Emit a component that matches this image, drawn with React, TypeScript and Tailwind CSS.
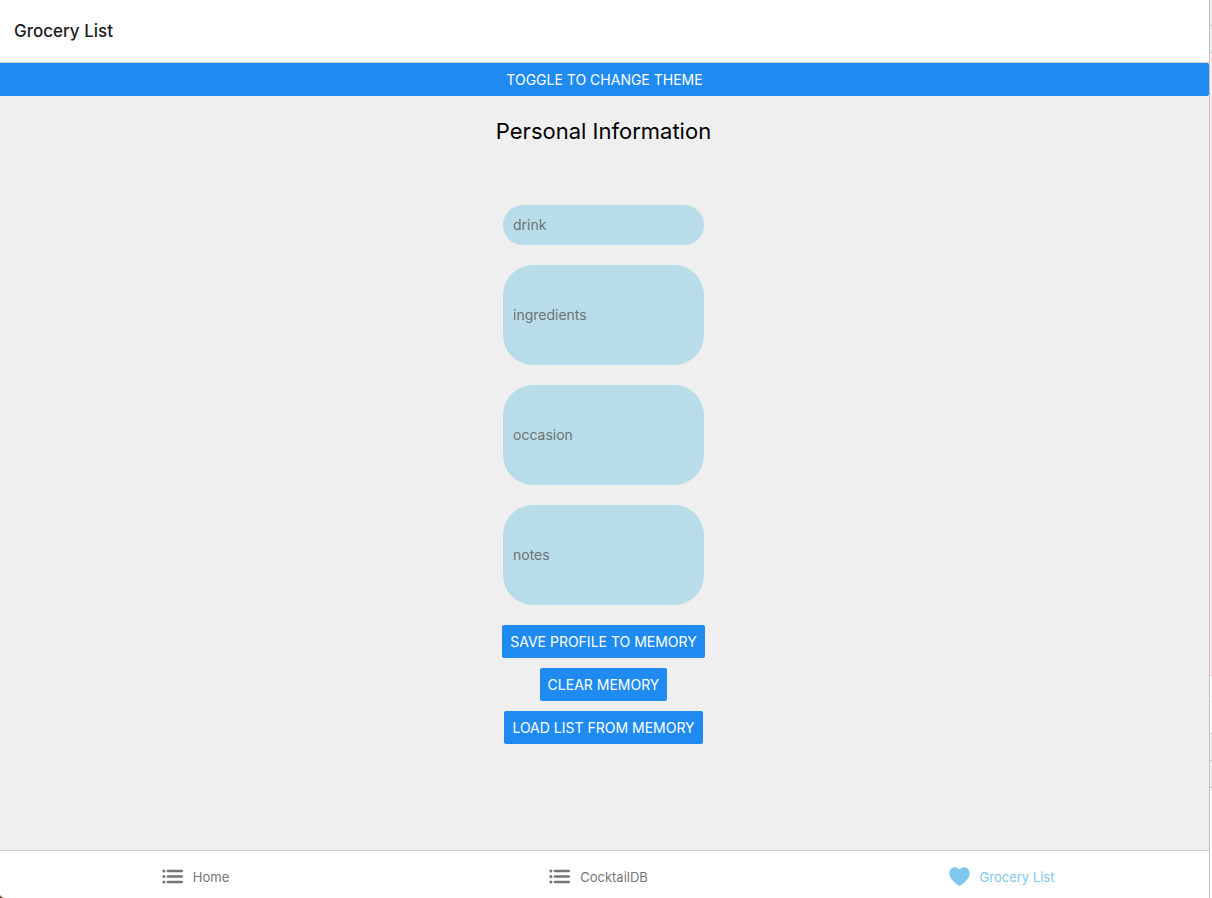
import { useState } from "react";
import { IoHeart, IoList } from "react-icons/io5";

const fields = [
  { name: "drink", shape: "h-10 rounded-[20px]" },
  { name: "ingredients", shape: "h-25 rounded-[30px]" },
  { name: "occasion", shape: "h-25 rounded-[30px]" },
  { name: "notes", shape: "h-25 rounded-[30px]" },
];

const actions = ["Save profile to memory", "Clear memory", "Load list from memory"];

const tabs = [
  { label: "Home", Icon: IoList, color: "text-[#757576]" },
  { label: "CocktailDB", Icon: IoList, color: "text-[#757576]" },
  { label: "Grocery List", Icon: IoHeart, color: "text-[#7fc7ec]" },
];

function ActionButton({ label, corners = "rounded-xs" }: { label: string; corners?: string }) {
  return (
    <button
      type="button"
      className={`bg-[#1f8bf1] p-2 text-center text-sm leading-[17px] whitespace-nowrap text-white uppercase ${corners}`}
    >
      {label}
    </button>
  );
}

function ProfileForm() {
  const [values, setValues] = useState<Record<string, string>>({});
  return (
    <form className="mt-[58px] flex flex-col items-center gap-5 pr-0.5">
      {fields.map(({ name, shape }) => (
        <input
          key={name}
          aria-label={name}
          placeholder={name}
          value={values[name] ?? ""}
          onChange={(e) => setValues({ ...values, [name]: e.target.value })}
          className={`w-[201px] bg-[#b9dde8] px-2.5 pb-0.5 text-sm text-black outline-none placeholder:text-[#6b7275] ${shape}`}
        />
      ))}
      <div className="flex flex-col items-center gap-2.5">
        {actions.map((label) => (
          <ActionButton key={label} label={label} />
        ))}
      </div>
    </form>
  );
}

function EdgeStrip() {
  return (
    <div aria-hidden="true" className="flex w-[3px] shrink-0 flex-col border-l border-[#bfc1c4] bg-white">
      <div className="h-[26px] border-b border-[#c5cad0] bg-[#eef1f4]" />
      <div className="h-[27px] border-b border-[#c5cad0] bg-[#eef1f4]" />
      <div className="h-[623px] border-b border-[#f5c6c8] bg-[#fcecec]" />
      <div className="h-[21px] border-b border-[#ececec]" />
      <div className="h-[37px] border-b border-[#c5cad0]" />
      <div className="h-[27px] border-b border-[#c5cad0] bg-[#eef1f4]" />
      <div className="h-[27px] border-b border-[#c5cad0] bg-[#eef1f4]" />
    </div>
  );
}

export default function App() {
  return (
    <div className="relative flex min-h-screen bg-white font-['Inter','Liberation_Sans',sans-serif]">
      <div className="flex min-w-0 flex-1 flex-col">
        <header className="flex h-[63px] items-center border-b border-[#d2d2d2] px-3.5 pt-0.5">
          <h1 className="text-[17px] font-medium text-[#1c1c1e]">Grocery List</h1>
        </header>
        <main className="flex flex-1 flex-col bg-[#efefef]">
          <ActionButton label="Toggle to change theme" corners="rounded-r-xs" />
          <h2 className="mt-[19px] pr-0.5 text-center text-[22px] leading-8 text-black">Personal Information</h2>
          <ProfileForm />
        </main>
        <nav className="flex h-12 border-t border-[#d0d0d0] bg-white">
          {tabs.map(({ label, Icon, color }) => (
            <a key={label} href="#" className={`flex flex-1 items-center justify-center gap-2 pt-1 pr-3.5 text-[13px] ${color}`}>
              <Icon size={25} />
              <span className="pt-0.5">{label}</span>
            </a>
          ))}
        </nav>
      </div>
      <EdgeStrip />
      <svg aria-hidden="true" className="absolute bottom-0 left-0" width="4" height="4" viewBox="0 0 4 4">
        <path d="M0 1Q1 3 4 4H0Z" fill="#6e5648" />
      </svg>
    </div>
  );
}
